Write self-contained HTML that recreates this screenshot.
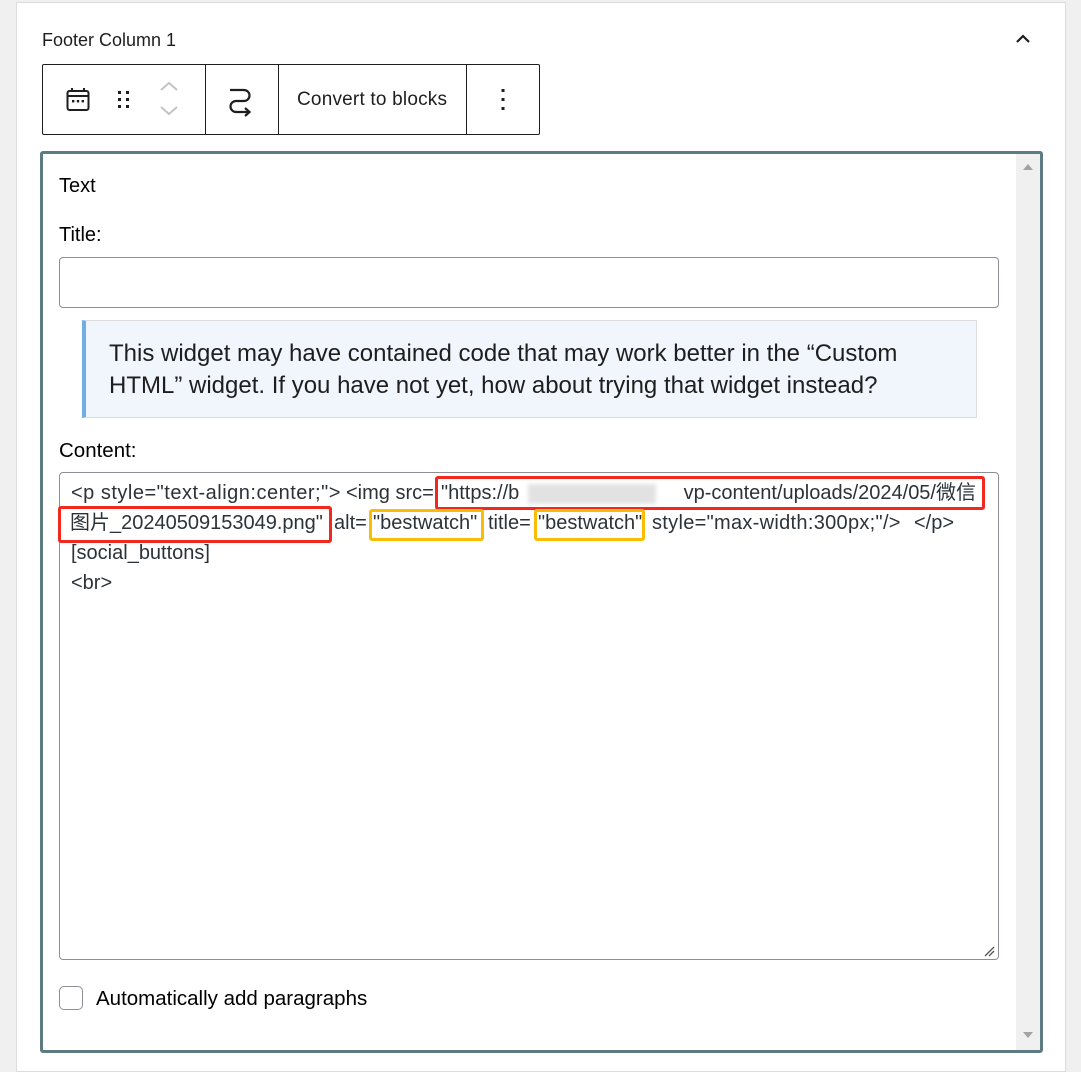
<!DOCTYPE html>
<html><head><meta charset="utf-8"><style>
*{box-sizing:border-box;margin:0;padding:0}
body{width:1081px;height:1059px;background:#f0f0f1;position:relative;overflow:hidden;font-family:"Liberation Sans","Noto Sans CJK SC",sans-serif;color:#1e1e1e}
.a{position:absolute}
.panel{left:16px;top:2px;width:1050px;height:1070px;background:#fff;border:1px solid #dcdcde}
.c{position:absolute;font-size:20px;color:#2c3338;white-space:nowrap;line-height:24px}
.hr{border:3px solid #f0281e;border-radius:3px}
.hy{border:3px solid #fbbc05;border-radius:3px}
</style></head><body>
<div class="a panel"></div>
<div class="a" style="left:42px;top:30px;font-size:18px;color:#1e1e1e">Footer Column 1</div>
<svg class="a" style="left:1013px;top:30px" width="20" height="16" viewBox="0 0 20 16"><path d="M4 12 L10 6 L16 12" fill="none" stroke="#1e1e1e" stroke-width="2.2"/></svg>

<div class="a" style="left:42px;top:64px;width:498px;height:71px;border:1px solid #1e1e1e;border-radius:2px"></div>
<div class="a" style="left:205px;top:64px;width:1px;height:71px;background:#1e1e1e"></div>
<div class="a" style="left:278px;top:64px;width:1px;height:71px;background:#1e1e1e"></div>
<div class="a" style="left:466px;top:64px;width:1px;height:71px;background:#1e1e1e"></div>
<svg class="a" style="left:64px;top:86px" width="28" height="28" viewBox="0 0 28 28"><rect x="3.5" y="5" width="21" height="19" rx="2" fill="none" stroke="#1e1e1e" stroke-width="2"/><line x1="3.5" y1="10" x2="24.5" y2="10" stroke="#1e1e1e" stroke-width="2"/><line x1="8" y1="2" x2="8" y2="6" stroke="#1e1e1e" stroke-width="2"/><line x1="20" y1="2" x2="20" y2="6" stroke="#1e1e1e" stroke-width="2"/><rect x="8" y="14" width="2.4" height="2.4" fill="#1e1e1e"/><rect x="12.8" y="14" width="2.4" height="2.4" fill="#1e1e1e"/><rect x="17.6" y="14" width="2.4" height="2.4" fill="#1e1e1e"/></svg>
<svg class="a" style="left:115px;top:88px" width="20" height="24" viewBox="0 0 20 24"><g fill="#1e1e1e"><rect x="3" y="3" width="3" height="3"/><rect x="11" y="3" width="3" height="3"/><rect x="3" y="10" width="3" height="3"/><rect x="11" y="10" width="3" height="3"/><rect x="3" y="17" width="3" height="3"/><rect x="11" y="17" width="3" height="3"/></g></svg>
<svg class="a" style="left:158px;top:78px" width="22" height="42" viewBox="0 0 22 42"><path d="M3 12 L11 5 L19 12 M3 29 L11 36 L19 29" fill="none" stroke="#c3c4c7" stroke-width="2"/></svg>
<svg class="a" style="left:226px;top:84px" width="30" height="34" viewBox="0 0 30 34"><path d="M4 6 H18 a5.5 5.5 0 0 1 0 11 H10 a5.5 5.5 0 0 0 0 11 H22" fill="none" stroke="#1e1e1e" stroke-width="2.2"/><path d="M19 24 L23.5 28 L19 32" fill="none" stroke="#1e1e1e" stroke-width="2.2"/></svg>
<div class="a" style="left:297px;top:89px;font-size:19px;color:#1e1e1e;letter-spacing:0.2px">Convert to blocks</div>
<svg class="a" style="left:498px;top:86px" width="10" height="28" viewBox="0 0 10 28"><g fill="#1e1e1e"><rect x="3.5" y="3" width="3" height="3"/><rect x="3.5" y="12" width="3" height="3"/><rect x="3.5" y="21" width="3" height="3"/></g></svg>

<div class="a" style="left:40px;top:151px;width:1003px;height:902px;border:3px solid #5f7b82;border-radius:3px;background:#fff"></div>
<div class="a" style="left:1016px;top:154px;width:24px;height:896px;background:#f0f0f0"></div>
<svg class="a" style="left:1020px;top:160px" width="16" height="12"><path d="M3 10 L8 4 L13 10Z" fill="#a3a3a3"/></svg>
<svg class="a" style="left:1020px;top:1030px" width="16" height="12"><path d="M3 2 L8 8 L13 2Z" fill="#a3a3a3"/></svg>

<div class="a" style="left:59px;top:175px;font-size:20px;color:#000">Text</div>
<div class="a" style="left:59px;top:224px;font-size:20px;color:#000">Title:</div>
<div class="a" style="left:59px;top:257px;width:940px;height:51px;border:1px solid #8c8f94;border-radius:4px"></div>

<div class="a" style="left:82px;top:320px;width:895px;height:98px;background:#f0f6fc;border:1px solid #dcdcde;border-left:4px solid #72aee6"></div>
<div class="a" style="left:109px;top:338px;font-size:24px;line-height:32px;color:#1e1e1e;white-space:nowrap">This widget may have contained code that may work better in the “Custom<br>HTML” widget. If you have not yet, how about trying that widget instead?</div>

<div class="a" style="left:59px;top:439px;font-size:20.5px;color:#000">Content:</div>
<div class="a" style="left:59px;top:472px;width:940px;height:488px;border:1px solid #8c8f94;border-radius:4px"></div>
<svg class="a" style="left:982px;top:944px" width="14" height="14"><path d="M3 12 L12 3 M7 12 L12 7" stroke="#555" stroke-width="1.3"/></svg>

<div class="c" style="left:71px;top:481px;letter-spacing:0.5px">&lt;p style="text-align:center;"&gt;</div>
<div class="c" style="left:346px;top:481px">&lt;img src=</div>
<div class="c" style="left:441px;top:481px">"https://b</div>
<div class="a" style="left:528px;top:484px;width:128px;height:20px;background:#e2e2e2;filter:blur(2px)"></div>
<div class="c" style="left:658px;top:481px;width:318px;text-align:right">vp-content/uploads/2024/05/微信</div>

<div class="c" style="left:70px;top:511px">图片_20240509153049.png"</div>
<div class="c" style="left:334px;top:511px">alt=</div>
<div class="c" style="left:373px;top:511px">"bestwatch"</div>
<div class="c" style="left:488px;top:511px">title=</div>
<div class="c" style="left:538px;top:511px">"bestwatch"</div>
<div class="c" style="left:652px;top:511px;letter-spacing:0.3px">style="max-width:300px;"/&gt;</div>
<div class="c" style="left:914px;top:511px">&lt;/p&gt;</div>
<div class="c" style="left:71px;top:541px">[social_buttons]</div>
<div class="c" style="left:71px;top:571px">&lt;br&gt;</div>

<div class="a hr" style="left:435px;top:476px;width:550px;height:34px"></div>
<div class="a hr" style="left:58px;top:506px;width:274px;height:37px"></div>
<div class="a hy" style="left:369px;top:509px;width:115px;height:32px"></div>
<div class="a hy" style="left:534px;top:509px;width:111px;height:32px"></div>

<div class="a" style="left:59px;top:986px;width:24px;height:24px;border:1px solid #8c8f94;border-radius:5px;background:#fff"></div>
<div class="a" style="left:96px;top:987px;font-size:20.5px;color:#000">Automatically add paragraphs</div>
</body></html>
